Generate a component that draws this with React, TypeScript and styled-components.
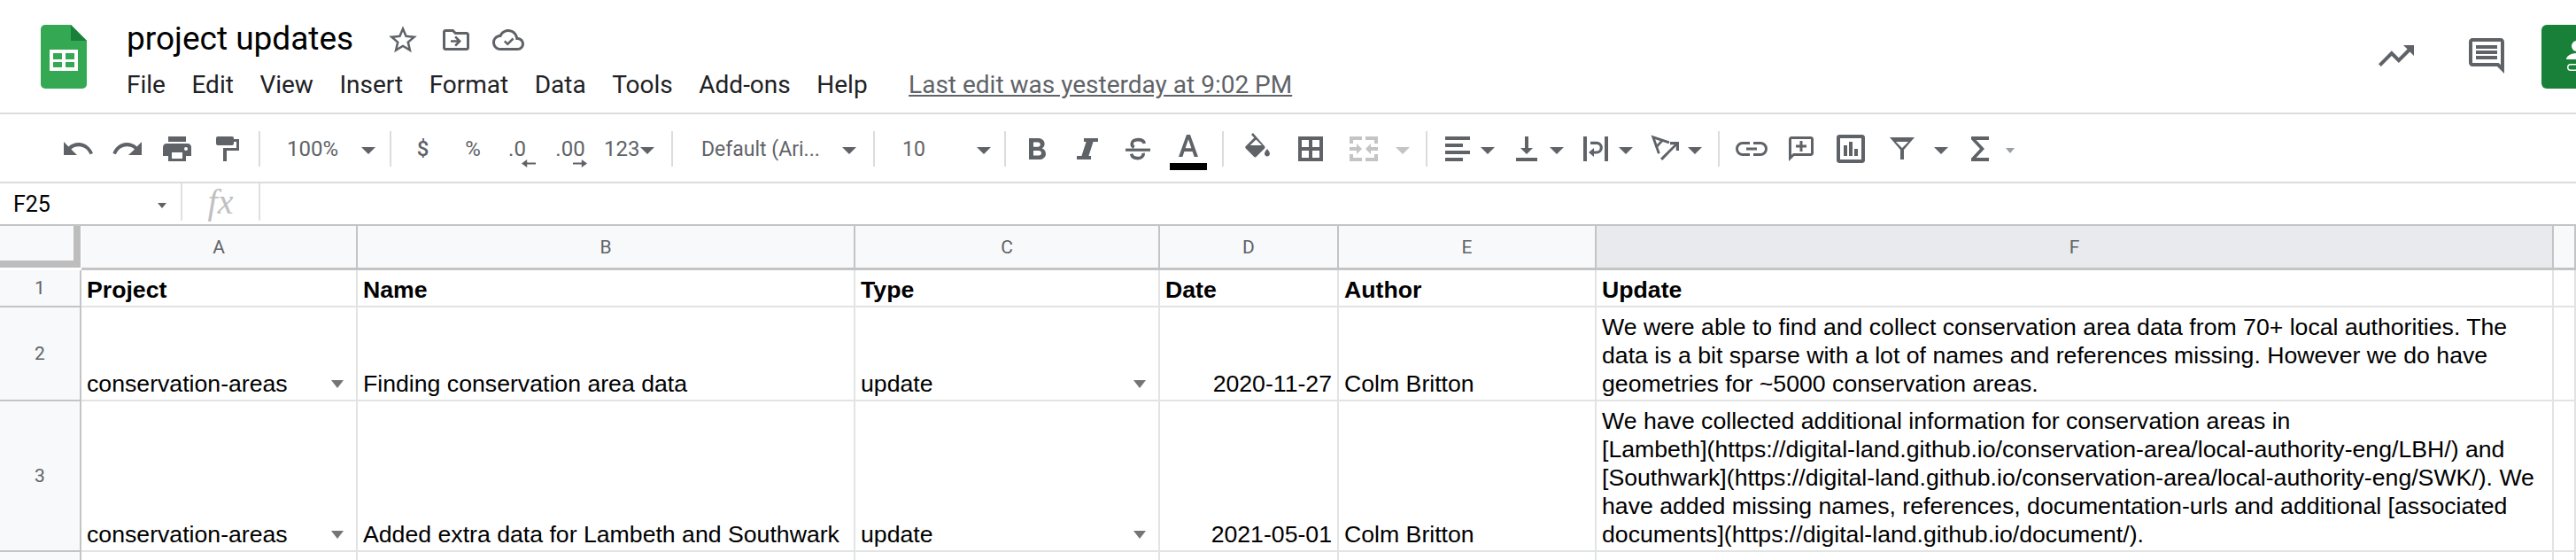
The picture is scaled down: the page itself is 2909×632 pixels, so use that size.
import React from 'react';
import styled, { createGlobalStyle } from 'styled-components';

const GlobalStyle = createGlobalStyle`
  html, body { margin: 0; padding: 0; background: #fff; }
  body { font-family: "Liberation Sans", Arial, sans-serif; }
`;

const Ico: React.FC<{ d: string; size?: number; color?: string; box?: number; children?: React.ReactNode }> = ({
  d,
  size = 36,
  color = '#5f6368',
  box = 18,
  children,
}) => (
  <svg width={size} height={size} viewBox={`0 0 ${box} ${box}`} fill={color}>
    <path d={d} fillRule="evenodd" />
    {children}
  </svg>
);

// header icons are on the 24 grid, toolbar icons on the 18 grid
const P = {
  star: 'M22 9.24l-7.19-.62L12 2 9.19 8.63 2 9.24l5.46 4.73L5.82 21 12 17.27 18.18 21l-1.63-7.03L22 9.24zM12 15.4l-3.76 2.27 1-4.28-3.32-2.88 4.38-.38L12 6.1l1.71 4.04 4.38.38-3.32 2.88 1 4.28L12 15.4z',
  move: 'M20 6h-8l-2-2H4c-1.1 0-2 .9-2 2v12c0 1.1.9 2 2 2h16c1.1 0 2-.9 2-2V8c0-1.1-.9-2-2-2zm0 12H4V6h5.17l2 2H20v10zm-8-1l4-4-4-4-1.2 1.2 1.9 1.9H8v1.8h4.7l-1.9 1.9z',
  cloud: 'M19.35 10.04C18.67 6.59 15.64 4 12 4 9.11 4 6.6 5.64 5.35 8.04 2.34 8.36 0 10.91 0 14c0 3.31 2.69 6 6 6h13c2.76 0 5-2.24 5-5 0-2.64-2.05-4.78-4.65-4.96zM19 18H6c-2.21 0-4-1.79-4-4 0-2.05 1.53-3.76 3.56-3.97l1.07-.11.5-.95C8.08 7.14 9.94 6 12 6c2.62 0 4.88 1.86 5.39 4.43l.3 1.5 1.53.11c1.56.1 2.78 1.41 2.78 2.96 0 1.65-1.35 3-3 3zm-7.5-1.6l-2.9-2.9 1.2-1.2 1.7 1.7 3.6-3.6 1.2 1.2z',
  trend: 'M16 6l2.29 2.29-4.88 4.88-4-4L2 16.59 3.41 18l6-6 4 4 6.3-6.29L22 12V6z',
  comments: 'M21.99 4c0-1.1-.89-2-1.99-2H4c-1.1 0-2 .9-2 2v12c0 1.1.9 2 2 2h14l4 4-.01-18zM20 4v13.17L18.83 16H4V4h16zM6 12h12v2H6zm0-3h12v2H6zm0-3h12v2H6z',
  undo: 'M9.5 5.5C7.2 5.5 5.2 6.3 3.7 7.7L1 5v7.5h7.5L5.2 9.2c1.1-1 2.6-1.6 4.3-1.6 2.9 0 5.3 1.9 6.2 4.5l1.8-.6C16.2 8.1 13.1 5.5 9.5 5.5z',
  redo: 'M14.3 7.7C12.8 6.3 10.8 5.5 8.5 5.5c-3.6 0-6.7 2.6-7.8 6l1.8.6c.9-2.6 3.3-4.5 6.2-4.5 1.7 0 3.2.6 4.3 1.6L9.5 12.5H17V5z',
  print: 'M4 2h10v3H4zM3 6h12c1.1 0 2 .9 2 2v5h-3v3H4v-3H1V8c0-1.1.9-2 2-2zM6 11v3.5h6V11zM14 8a1 1 0 1 0 0 2 1 1 0 0 0 0-2z',
  paint: 'M3.5 2h8a1 1 0 0 1 1 1v3a1 1 0 0 1-1 1h-8a1 1 0 0 1-1-1V3a1 1 0 0 1 1-1zM12.5 3.5h3V10H8.5v6h-2V8.5H14V5h-1.5z',
  bold: 'M4.5 3h5.2c2 0 3.6 1.3 3.6 3.2 0 1.1-.6 2-1.5 2.5 1.3.4 2.2 1.5 2.2 3 0 2-1.6 3.3-3.7 3.3H4.5zM7 5.2v2.7h2.5c.9 0 1.4-.6 1.4-1.35S10.4 5.2 9.5 5.2zM7 10v2.8h3c.9 0 1.5-.6 1.5-1.4S10.9 10 10 10z',
  italic: 'M7 3h8v2h-2.7L9.7 13H11v2H3v-2h2.7L8.3 5H7z',
  strikeBar: 'M2 8.8h14v1.6H2z',
  textA: 'M8 1h2l4.5 12.5h-2.2l-1-3H6.7l-1 3H3.5zM7.3 8.6h3.4L9 3.6z',
  fill: 'M6.5 0l-1 1 1.7 1.7-4.7 4.7c-.5.5-.5 1 0 1.5l4.5 4.5c.4.4 1 .4 1.4 0l4.5-4.5c.5-.5.5-1 0-1.5zM8.2 3.7L11.5 7H4.9zM14.5 9s-1.5 1.7-1.5 2.8c0 .8.7 1.5 1.5 1.5s1.5-.7 1.5-1.5C16 10.7 14.5 9 14.5 9z',
  borders: 'M2 2v14h14V2zM8 8H4V4h4zM14 8h-4V4h4zM8 14H4v-4h4zM14 14h-4v-4h4z',
  merge: 'M1 2h7v2H3v2H1zM10 2h7v4h-2V4h-5zM1 12h2v2h5v2H1zM15 12h2v4h-7v-2h5zM1 8h4V6l3 3-3 3v-2H1zM17 8h-4V6l-3 3 3 3v-2h4z',
  alignL: 'M2 2h14v2H2zM2 6h10v2H2zM2 10h14v2H2zM2 14h10v2H2z',
  alignB: 'M8 2h2v6.5h2.5L9 12 5.5 8.5H8zM3 14h12v2H3z',
  wrap: 'M2 2h2v14H2zM14 2h2v14h-2zM8 8.5v5L5 11z',
  rotateArrow: 'M17 5v5h-1.6V7.5L7.6 15.5l-1.1-1.1L14.4 6.6H12V5z',
  link: 'M1.5 9c0-1.4 1.1-2.5 2.5-2.5h4V5H4a4 4 0 0 0 0 8h4v-1.5H4C2.6 11.5 1.5 10.4 1.5 9zM6 9.8h6V8.2H6zM14 5h-4v1.5h4c1.4 0 2.5 1.1 2.5 2.5s-1.1 2.5-2.5 2.5h-4V13h4a4 4 0 0 0 0-8z',
  addComment: 'M14.5 2h-11C2.7 2 2 2.7 2 3.5V16l3-3h9.5c.8 0 1.5-.7 1.5-1.5v-8C16 2.7 15.3 2 14.5 2zm0 9.5H4.5l-1 1v-9h11zM8.25 4.5h1.5v2.25H12v1.5H9.75v2.25h-1.5V8.25H6v-1.5h2.25z',
  chart: 'M15.5 1h-13C1.7 1 1 1.7 1 2.5v13c0 .8.7 1.5 1.5 1.5h13c.8 0 1.5-.7 1.5-1.5v-13C17 1.7 16.3 1 15.5 1zM15 15H3V3h12zM5 7h2v6H5zM8 5h2v8H8zM11 9h2v4h-2z',
  filter: 'M2 2.5h14L10 9.5V15H8V9.5zM5.5 5L9 8.5 12.5 5z',
  sigma: 'M4 2h10v2H6.8L11.5 9l-4.7 5H14v2H4v-1.6L9 9 4 3.6z',
};

const App: React.FC = () => (
  <Page>
    <GlobalStyle />
    <Header>
      <Logo width="52" height="72" viewBox="0 0 52 72">
        <path d="M5 0h29l18 18v49a5 5 0 0 1-5 5H5a5 5 0 0 1-5-5V5a5 5 0 0 1 5-5z" fill="#34a853" />
        <path d="M34 0l18 18H34z" fill="#188038" />
        <path d="M10 28h32v24H10zM14 32v7h10v-7zM28 32v7h10v-7zM14 42v6h10v-6zM28 42v6h10v-6z" fill="#fff" fillRule="evenodd" />
      </Logo>
      <TitleBlock>
        <TitleRow>
          <Title>project updates</Title>
          <TitleIcons>
            <Ico d={P.star} size={38} box={24} />
            <Ico d={P.move} size={36} box={24} />
            <Ico d={P.cloud} size={36} box={24} />
          </TitleIcons>
        </TitleRow>
        <MenuRow>
          {['File', 'Edit', 'View', 'Insert', 'Format', 'Data', 'Tools', 'Add-ons', 'Help'].map((m) => (
            <MenuItem key={m}>{m}</MenuItem>
          ))}
          <LastEdit>Last edit was yesterday at 9:02 PM</LastEdit>
        </MenuRow>
      </TitleBlock>
      <HeaderRight>
        <HeaderIcon><Ico d={P.trend} size={48} box={24} /></HeaderIcon>
        <HeaderIcon><Ico d={P.comments} size={48} box={24} /></HeaderIcon>
        <ShareButton>
          <svg width="39" height="72" viewBox="0 0 39 72" fill="#fff">
            <circle cx="40" cy="24" r="6" />
            <path d="M28 39c0-4 6-7 11-7v7z" />
            <path d="M39 44h-6a4 4 0 0 0 0 8h6v-1.5h-6a2.5 2.5 0 0 1 0-5h6z" />
          </svg>
        </ShareButton>
      </HeaderRight>
    </Header>

    <Toolbar>
      <Slot $w={56}><Ico d={P.undo} /></Slot>
      <Slot $w={56}><Ico d={P.redo} /></Slot>
      <Slot $w={56}><Ico d={P.print} /></Slot>
      <Slot $w={57}><Ico d={P.paint} /></Slot>
      <Divider $w={16} />
      <TextSlot $w={99} $pad={23}>100%</TextSlot>
      <Slot $w={32}><Caret /></Slot>
      <Divider $w={17} />
      <TextSlot $w={57} $center $strong>$</TextSlot>
      <TextSlot $w={56} $center>%</TextSlot>
      <Slot $w={44}>
        <Decimal>.0</Decimal>
        <DecimalArrow viewBox="0 0 18 10" $right={1}><path d="M18 4H7V0L0 5l7 5V6h11z" /></DecimalArrow>
      </Slot>
      <Slot $w={76}>
        <Decimal>.00</Decimal>
        <DecimalArrow viewBox="0 0 18 10" $right={19}><path d="M0 4h11V0l7 5-7 5V6H0z" /></DecimalArrow>
      </Slot>
      <TextSlot $w={38} $center>123</TextSlot>
      <Slot $w={30} $start><Caret /></Slot>
      <Divider $w={17} />
      <TextSlot $w={172} $pad={25} $small>Default (Ari...</TextSlot>
      <Slot $w={40}><Caret /></Slot>
      <Divider $w={16} />
      <TextSlot $w={99} $pad={24} $small>10</TextSlot>
      <Slot $w={33}><Caret /></Slot>
      <Divider $w={16} />
      <Slot $w={56}><Ico d={P.bold} /></Slot>
      <Slot $w={58}><Ico d={P.italic} /></Slot>
      <Slot $w={56}>
        <Ico d={P.strikeBar}>
          <g fill="none" stroke="#5f6368" strokeWidth="1.8">
            <path d="M12.6 6C12.4 4.5 10.9 3.8 9 3.8 7.2 3.8 5.6 4.7 5.6 6.1c0 .9.4 1.6 1.2 2.1" />
            <path d="M12.1 11.4c.2 1.7-1.3 2.9-3.1 2.9-1.9 0-3.4-.9-3.7-2.5" />
          </g>
        </Ico>
      </Slot>
      <Slot $w={58}>
        <TextColor>
          <Ico d={P.textA} />
          <ColorBar />
        </TextColor>
      </Slot>
      <Divider $w={19} />
      <Slot $w={60}><Ico d={P.fill} /></Slot>
      <Slot $w={60}><Ico d={P.borders} /></Slot>
      <Slot $w={60}><Ico d={P.merge} color="#c4c4c4" /></Slot>
      <Slot $w={28}><Caret $muted /></Slot>
      <Divider $w={26} />
      <DropTool>
        <Slot $w={44}><Ico d={P.alignL} /></Slot>
        <Slot $w={24}><Caret /></Slot>
      </DropTool>
      <DropTool>
        <Slot $w={44}><Ico d={P.alignB} /></Slot>
        <Slot $w={24}><Caret /></Slot>
      </DropTool>
      <DropTool>
        <Slot $w={44}>
          <Ico d={P.wrap}>
            <path d="M6 5.7h3.5a2.6 2.6 0 0 1 0 5.3H7.5" fill="none" stroke="#5f6368" strokeWidth="1.6" />
          </Ico>
        </Slot>
        <Slot $w={24}><Caret /></Slot>
      </DropTool>
      <DropTool>
        <Slot $w={44}>
          <Ico d={P.rotateArrow}>
            <g fill="none" stroke="#5f6368" strokeWidth="1.4">
              <path d="M11.5 5.4L2.4 2.4l3.3 9.2" />
              <path d="M7.7 4.2L4 8.2" />
            </g>
          </Ico>
        </Slot>
        <Slot $w={24}><Caret /></Slot>
      </DropTool>
      <Divider $w={10} />
      <Slot $w={64}><Ico d={P.link} /></Slot>
      <Slot $w={48}><Ico d={P.addComment} /></Slot>
      <Slot $w={64}><Ico d={P.chart} /></Slot>
      <Slot $w={52}><Ico d={P.filter} /></Slot>
      <Slot $w={36}><Caret /></Slot>
      <Slot $w={52}><Ico d={P.sigma} /></Slot>
      <Slot $w={16}><Caret $small $muted /></Slot>
    </Toolbar>

    <FormulaBar>
      <NameBox>
        F25
        <Caret $small />
      </NameBox>
      <FxBox>fx</FxBox>
    </FormulaBar>

    <Sheet>
      <Corner />
      {['A', 'B', 'C', 'D', 'E', 'F'].map((c) => (
        <ColHead key={c} $active={c === 'F'}>{c}</ColHead>
      ))}
      <ColHead />

      <RowHead>1</RowHead>
      {['Project', 'Name', 'Type', 'Date', 'Author', 'Update'].map((h) => (
        <HeadCell key={h}>{h}</HeadCell>
      ))}
      <Cell />

      <RowHead $h={106}>2</RowHead>
      <Cell>conservation-areas<ChipCaret /></Cell>
      <Cell>Finding conservation area data</Cell>
      <Cell>update<ChipCaret /></Cell>
      <Cell $right>2020-11-27</Cell>
      <Cell>Colm Britton</Cell>
      <Cell>
        <WrapText>
          We were able to find and collect conservation area data from 70+ local authorities. The<br />
          data is a bit sparse with a lot of names and references missing. However we do have<br />
          geometries for ~5000 conservation areas.
        </WrapText>
      </Cell>
      <Cell />

      <RowHead $h={170}>3</RowHead>
      <Cell>conservation-areas<ChipCaret /></Cell>
      <Cell>Added extra data for Lambeth and Southwark</Cell>
      <Cell>update<ChipCaret /></Cell>
      <Cell $right>2021-05-01</Cell>
      <Cell>Colm Britton</Cell>
      <Cell>
        <WrapText>
          We have collected additional information for conservation areas in<br />
          [Lambeth](https://digital-land.github.io/conservation-area/local-authority-eng/LBH/) and<br />
          [Southwark](https://digital-land.github.io/conservation-area/local-authority-eng/SWK/). We<br />
          have added missing names, references, documentation-urls and additional [associated<br />
          documents](https://digital-land.github.io/document/).
        </WrapText>
      </Cell>
      <Cell />

      <RowHead $h={20} />
      <Cell /><Cell /><Cell /><Cell /><Cell /><Cell /><Cell />
    </Sheet>
  </Page>
);

export default App;

const Page = styled.div`
  width: 2909px;
  height: 632px;
  overflow: hidden;
  background: #fff;
`;

const Header = styled.header`
  display: flex;
  height: 129px;
  padding: 28px 0 0 46px;
  box-sizing: border-box;
  border-bottom: 2px solid #dadce0;
`;

const Logo = styled.svg`
  flex-shrink: 0;
`;

const TitleBlock = styled.div`
  display: flex;
  flex-direction: column;
  margin-left: 45px;
  margin-top: -7px;
`;

const TitleRow = styled.div`
  display: flex;
  align-items: center;
  height: 44px;
`;

const Title = styled.div`
  font-family: Roboto, sans-serif;
  font-size: 37px;
  color: #000;
`;

const TitleIcons = styled.div`
  display: flex;
  align-items: center;
  gap: 23px;
  margin-left: 37px;
  margin-top: 4px;
`;

const MenuRow = styled.nav`
  display: flex;
  align-items: center;
  gap: 29.5px;
  margin-top: 14px;
`;

const MenuItem = styled.span`
  font-family: Roboto, sans-serif;
  font-size: 28px;
  color: #202124;
`;

const LastEdit = styled.span`
  font-family: Roboto, sans-serif;
  font-size: 28px;
  color: #5f6368;
  text-decoration: underline;
  margin-left: 17px;
`;

const HeaderRight = styled.div`
  display: flex;
  margin-left: auto;
  gap: 54px;
  align-items: flex-start;
`;

const HeaderIcon = styled.div`
  display: flex;
  margin-top: 11px;
`;

const ShareButton = styled.div`
  width: 39px;
  height: 72px;
  margin-left: -16px;
  background: #188038;
  border-radius: 6px 0 0 6px;
`;

const Toolbar = styled.div`
  display: flex;
  align-items: center;
  height: 78px;
  padding: 2px 0 0 60px;
  box-sizing: border-box;
  border-bottom: 2px solid #dadce0;
`;

const Slot = styled.div<{ $w: number; $start?: boolean }>`
  position: relative;
  display: flex;
  align-items: center;
  justify-content: ${(p) => (p.$start ? 'flex-start' : 'center')};
  padding-left: ${(p) => (p.$start ? 3 : 0)}px;
  box-sizing: border-box;
  flex-shrink: 0;
  width: ${(p) => p.$w}px;
  height: 44px;
`;

const DropTool = styled.div`
  display: flex;
  flex-shrink: 0;
  width: 78px;
`;

const TextSlot = styled.div<{ $w: number; $pad?: number; $center?: boolean; $small?: boolean; $strong?: boolean }>`
  flex-shrink: 0;
  box-sizing: border-box;
  width: ${(p) => p.$w}px;
  padding-left: ${(p) => p.$pad ?? 0}px;
  text-align: ${(p) => (p.$center ? 'center' : 'left')};
  font-family: Roboto, sans-serif;
  font-size: ${(p) => (p.$small ? 23 : 24)}px;
  font-weight: ${(p) => (p.$strong ? 500 : 400)};
  color: #5f6368;
  white-space: nowrap;
`;

const Divider = styled.div<{ $w: number }>`
  flex-shrink: 0;
  width: ${(p) => p.$w}px;
  height: 40px;
  background: linear-gradient(#dadce0, #dadce0) center / 2px 100% no-repeat;
`;

const Caret = styled.span<{ $muted?: boolean; $small?: boolean }>`
  display: inline-block;
  flex-shrink: 0;
  width: 0;
  height: 0;
  margin-top: 4px;
  border-left: ${(p) => (p.$small ? 5 : 8)}px solid transparent;
  border-right: ${(p) => (p.$small ? 5 : 8)}px solid transparent;
  border-top: ${(p) => (p.$small ? 6 : 8)}px solid
    ${(p) => (p.$muted ? (p.$small ? '#9aa0a6' : '#c4c4c4') : '#5f6368')};
`;

const Decimal = styled.span`
  font-family: Roboto, sans-serif;
  font-size: 24px;
  color: #5f6368;
`;

const DecimalArrow = styled.svg<{ $right: number }>`
  position: absolute;
  bottom: 1px;
  right: ${(p) => p.$right}px;
  width: 16px;
  height: 9px;
  fill: #5f6368;
`;

const TextColor = styled.div`
  position: relative;
  display: flex;
`;

const ColorBar = styled.div`
  position: absolute;
  left: -3px;
  bottom: -6px;
  width: 42px;
  height: 8px;
  background: #000;
`;

const FormulaBar = styled.div`
  display: flex;
  height: 48px;
  box-sizing: border-box;
  border-bottom: 2px solid #c4c4c4;
`;

const NameBox = styled.div`
  display: flex;
  align-items: center;
  justify-content: space-between;
  box-sizing: border-box;
  width: 206px;
  height: 42px;
  padding: 4px 16px 0 15px;
  border-right: 2px solid #e0e0e0;
  font-family: Roboto, sans-serif;
  font-size: 25px;
  color: #000;
`;

const FxBox = styled.div`
  width: 88px;
  height: 42px;
  text-align: center;
  box-sizing: border-box;
  border-right: 2px solid #e0e0e0;
  font-family: "Liberation Serif", serif;
  font-style: italic;
  font-size: 40px;
  line-height: 42px;
  color: #c0c0c0;
`;

const Sheet = styled.div`
  display: grid;
  grid-template-columns: 92px 312px 562px 344px 202px 291px 1081px 25px;
`;

const Corner = styled.div`
  box-sizing: border-box;
  height: 47px;
  margin: 0 1px 3px 0;
  background: #f8f9fa;
  border-right: 8px solid #bdbdbd;
  border-bottom: 8px solid #bdbdbd;
`;

const ColHead = styled.div<{ $active?: boolean }>`
  display: flex;
  align-items: center;
  justify-content: center;
  box-sizing: border-box;
  height: 50px;
  background: ${(p) => (p.$active ? '#e8eaed' : '#f8f9fa')};
  border-right: 2px solid #c4c4c4;
  border-bottom: 3px solid #c4c4c4;
  font-family: Roboto, sans-serif;
  font-size: 21px;
  color: #5f6368;
`;

const RowHead = styled.div<{ $h?: number }>`
  display: flex;
  align-items: center;
  justify-content: center;
  box-sizing: border-box;
  height: ${(p) => p.$h ?? 42}px;
  background: #f8f9fa;
  border-right: 2px solid #c4c4c4;
  border-bottom: 2px solid #c4c4c4;
  font-family: Roboto, sans-serif;
  font-size: 21px;
  color: #5f6368;
`;

const Cell = styled.div<{ $right?: boolean }>`
  display: flex;
  align-items: flex-end;
  justify-content: ${(p) => (p.$right ? 'flex-end' : 'space-between')};
  box-sizing: border-box;
  min-width: 0;
  padding: 0 6px 2px 6px;
  border-right: 2px solid #e2e3e3;
  border-bottom: 2px solid #e2e3e3;
  font-size: 26.67px;
  line-height: 32px;
  color: #000;
  white-space: nowrap;
`;

const HeadCell = styled(Cell)`
  font-weight: 700;
`;

const WrapText = styled.div`
  white-space: normal;
`;

const ChipCaret = styled.span`
  width: 0;
  height: 0;
  margin: 0 8px 11px 0;
  border-left: 7.5px solid transparent;
  border-right: 7.5px solid transparent;
  border-top: 9px solid #757575;
`;
